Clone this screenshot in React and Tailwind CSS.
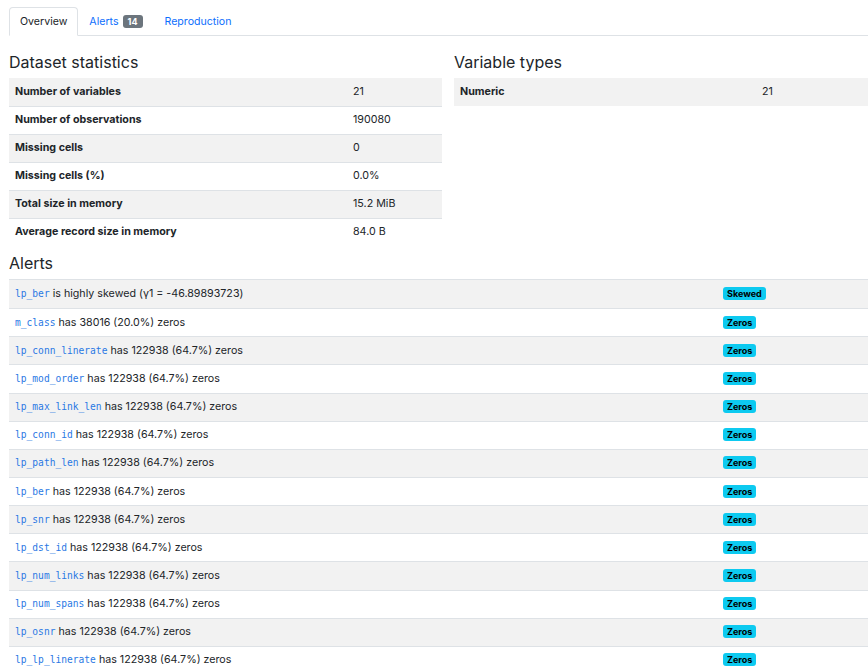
const stats = [
  ["Number of variables", "21"],
  ["Number of observations", "190080"],
  ["Missing cells", "0"],
  ["Missing cells (%)", "0.0%"],
  ["Total size in memory", "15.2 MiB"],
  ["Average record size in memory", "84.0 B"],
];

const types = [["Numeric", "21"]];

const alerts = [
  ["lp_ber", "is highly skewed (γ1 = -46.89893723)", "Skewed"],
  ["m_class", "has 38016 (20.0%) zeros", "Zeros"],
  ["lp_conn_linerate", "has 122938 (64.7%) zeros", "Zeros"],
  ["lp_mod_order", "has 122938 (64.7%) zeros", "Zeros"],
  ["lp_max_link_len", "has 122938 (64.7%) zeros", "Zeros"],
  ["lp_conn_id", "has 122938 (64.7%) zeros", "Zeros"],
  ["lp_path_len", "has 122938 (64.7%) zeros", "Zeros"],
  ["lp_ber", "has 122938 (64.7%) zeros", "Zeros"],
  ["lp_snr", "has 122938 (64.7%) zeros", "Zeros"],
  ["lp_dst_id", "has 122938 (64.7%) zeros", "Zeros"],
  ["lp_num_links", "has 122938 (64.7%) zeros", "Zeros"],
  ["lp_num_spans", "has 122938 (64.7%) zeros", "Zeros"],
  ["lp_osnr", "has 122938 (64.7%) zeros", "Zeros"],
  ["lp_lp_linerate", "has 122938 (64.7%) zeros", "Zeros"],
];

const StatTable = ({ rows, labelWidth }) => (
  <div className="w-full">
    {rows.map(([label, value], i) => (
      <div
        key={label}
        className={`flex h-[28px] items-center ${
          i > 0 ? "border-t border-[#dee2e6]" : ""
        } ${i % 2 === 0 ? "bg-[#f2f2f2]" : "bg-white"}`}
      >
        <div className={`${labelWidth} shrink-0 px-[6px] font-bold`}>{label}</div>
        <div className="px-[6px]">{value}</div>
      </div>
    ))}
  </div>
);

const Heading = ({ children }) => (
  <h4 className="flex h-[42px] items-end pb-[6px] text-[16px] leading-[20px] text-[#212529]">
    {children}
  </h4>
);

export default function App() {
  return (
    <div
      className="h-[671px] w-full overflow-hidden bg-white text-[10.7px] text-[#212529]"
      style={{ fontFamily: "Inter, 'Liberation Sans', sans-serif" }}
    >
      <div className="w-[896px] pl-[9px] pt-[7px]">
        {/* tabs */}
        <div className="flex h-[29px] items-end border-b border-[#dee2e6] text-[10.6px]">
          <div className="-mb-px flex h-[29px] items-center rounded-t-[4px] border border-b-white border-[#dee2e6] bg-white px-[10px] pt-px">
            Overview
          </div>
          <div className="flex h-[28px] items-center gap-[4px] px-[11px] pt-px text-[#0d6efd]">
            Alerts
            <span className="rounded-[3px] bg-[#6c757d] px-[5px] py-[1px] text-[9px] font-bold leading-[11px] text-white">
              14
            </span>
          </div>
          <div className="flex h-[28px] items-center px-[11px] pt-px text-[#0d6efd]">Reproduction</div>
        </div>

        <div className="flex gap-[12px]">
          <div className="w-[433px] shrink-0">
            <Heading>Dataset statistics</Heading>
            <StatTable rows={stats} labelWidth="w-[338px]" />
          </div>
          <div className="w-[433px] shrink-0">
            <Heading>Variable types</Heading>
            <StatTable rows={types} labelWidth="w-[302px]" />
          </div>
        </div>

        <h4 className="flex h-[33px] items-end pb-[6px] text-[16px] leading-[20px]">Alerts</h4>
        <div className="w-[878px] border-t border-[#dee2e6]">
          {alerts.map(([col, msg, tag], i) => (
            <div
              key={i}
              className={`flex h-[28.15px] items-center ${
                i > 0 ? "border-t border-[#dee2e6]" : ""
              } ${i % 2 === 0 ? "bg-[#f2f2f2]" : "bg-white"}`}
            >
              <div className="w-[708px] shrink-0 px-[6px]">
                <code
                  className="text-[9.6px] text-[#2a78e4]"
                  style={{ fontFamily: "'DejaVu Sans Mono', monospace" }}
                >
                  {col}
                </code>{" "}
                {msg}
              </div>
              <div className="px-[6px]">
                <span className="inline-block rounded-[3px] bg-[#0dcaf0] px-[4px] py-[1px] text-[9px] font-bold leading-[11px] text-black">
                  {tag}
                </span>
              </div>
            </div>
          ))}
        </div>
      </div>
    </div>
  );
}
